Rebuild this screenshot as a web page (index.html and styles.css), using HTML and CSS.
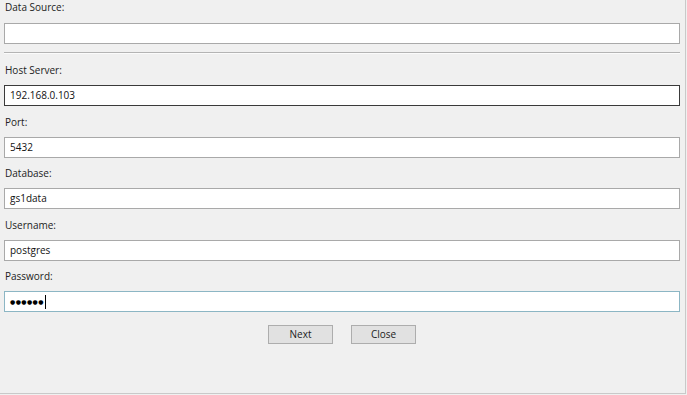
FILE: index.html
```html
<!DOCTYPE html>
<html lang="en">
<head>
<meta charset="utf-8">
<title>Connection Settings</title>
<link rel="stylesheet" href="styles.css">
</head>
<body>
<div class="window">
  <form class="form">
    <div class="field first">
      <label class="label">Data Source:</label>
      <div class="textbox"></div>
    </div>
    <div class="separator"></div>
    <div class="field after-sep">
      <label class="label">Host Server:</label>
      <div class="textbox hover">192.168.0.103</div>
    </div>
    <div class="field">
      <label class="label">Port:</label>
      <div class="textbox">5432</div>
    </div>
    <div class="field">
      <label class="label">Database:</label>
      <div class="textbox">gs1data</div>
    </div>
    <div class="field">
      <label class="label">Username:</label>
      <div class="textbox">postgres</div>
    </div>
    <div class="field">
      <label class="label">Password:</label>
      <div class="textbox focus"><span class="dots">●●●●●●</span><span class="caret"></span></div>
    </div>
    <div class="buttons">
      <button type="button" class="btn">Next</button>
      <button type="button" class="btn">Close</button>
    </div>
  </form>
</div>
</body>
</html>
```

FILE: styles.css
```css
html, body {
  margin: 0;
  padding: 0;
  background: #f0f0f0;
}

body {
  font-family: "Open Sans", "Noto Sans", sans-serif;
  font-size: 10px;
  color: #222;
}

.window {
  width: 685px;
  height: 393px;
  border-right: 1px solid #c9c9c9;
  border-bottom: 1px solid #c9c9c9;
  background: #f0f0f0;
}

.form {
  display: flex;
  flex-direction: column;
  padding: 0 5px 0 4px;
}

.field {
  display: flex;
  flex-direction: column;
  padding-top: 8.5px;
}

.field.first {
  padding-top: 0;
}

.field.after-sep {
  padding-top: 9px;
}

.label {
  display: block;
  height: 15px;
  line-height: 15px;
  padding-left: 1px;
  margin-bottom: 7px;
}

.field.first .label {
  margin-bottom: 8px;
}

.textbox {
  box-sizing: border-box;
  height: 21px;
  border: 1px solid #a9a9a9;
  background: #ffffff;
  line-height: 19px;
  padding-left: 5px;
  color: #111;
  display: flex;
  align-items: center;
}

.textbox.hover {
  border-color: #3a3a3a;
}

.textbox.focus {
  border-color: #8cb6c4;
}

.dots {
  font-family: "DejaVu Sans", sans-serif;
  font-size: 6px;
  letter-spacing: 0.4px;
  color: #000;
}

.caret {
  width: 1px;
  height: 14px;
  background: #000;
  margin-left: 1px;
}

.separator {
  margin-top: 8px;
  height: 1px;
  background: #b4b4b4;
  border-bottom: 1px solid #fbfbfb;
}

.buttons {
  display: flex;
  justify-content: center;
  gap: 18px;
  padding-top: 13px;
}

.btn {
  box-sizing: border-box;
  width: 65px;
  height: 19px;
  border: 1px solid #adadad;
  background: #e1e1e1;
  font-family: "Open Sans", "Noto Sans", sans-serif;
  font-size: 10px;
  color: #222;
  padding: 0;
  line-height: 17px;
}
```
